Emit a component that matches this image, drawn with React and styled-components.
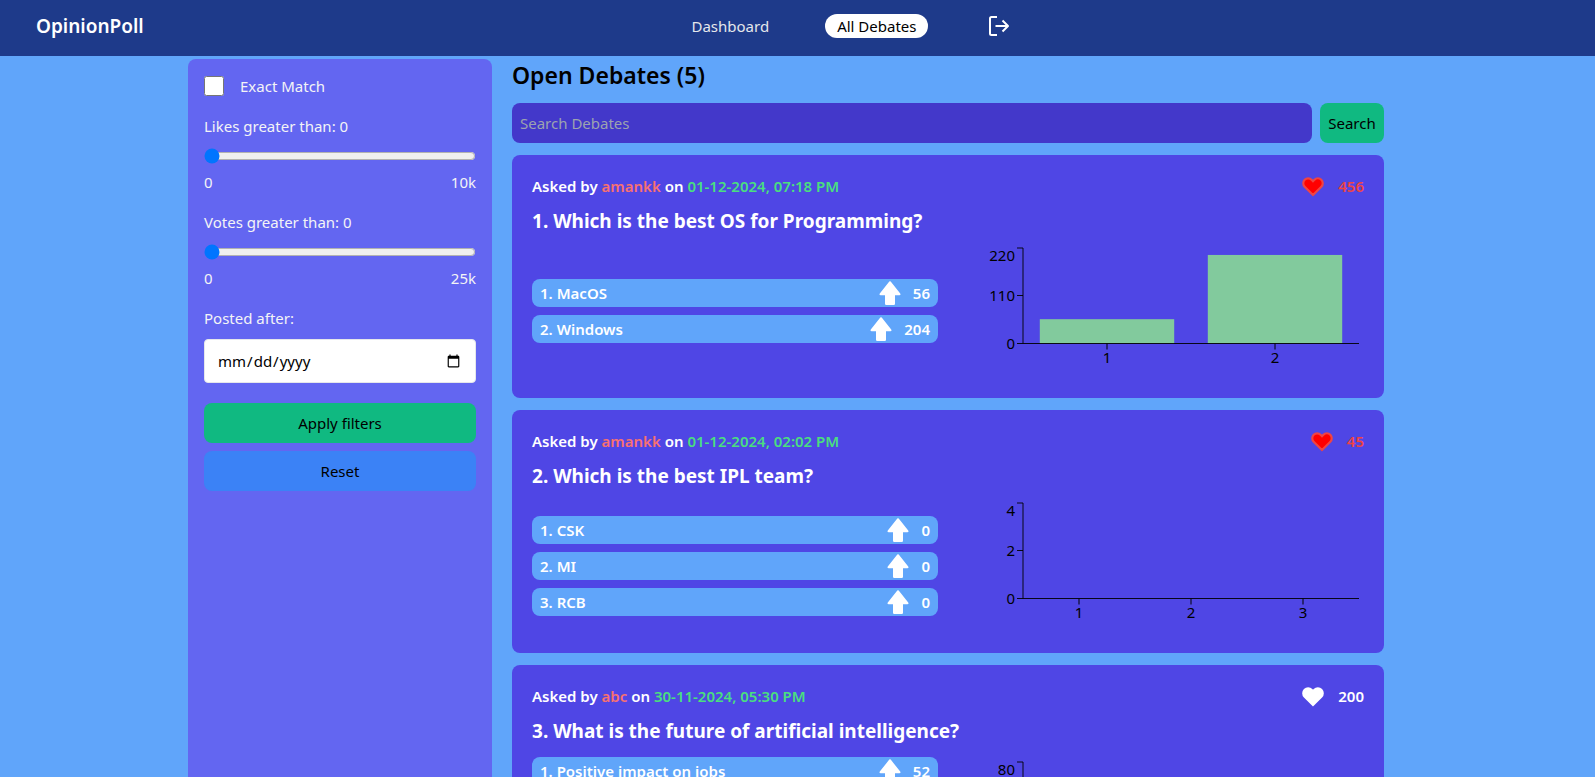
import React, { useState } from 'react';
import styled, { createGlobalStyle, css } from 'styled-components';

const GlobalStyle = createGlobalStyle`
  *, *::before, *::after { box-sizing: border-box; }
  body {
    margin: 0;
    background: #60a5fa;
    color: #000;
    font-family: "Noto Sans", sans-serif;
    font-size: 15px;
    line-height: 24px;
  }
  button, input { font: inherit; color: inherit; }
  button { border: 0; cursor: pointer; }
`;

const Page = styled.div`
  display: flex;
  flex-direction: column;
  height: 100vh;
`;

const Header = styled.header`
  display: grid;
  grid-template-columns: 42.6% 1fr;
  align-items: center;
  height: 56px;
  flex: none;
  padding-bottom: 4px;
  background: #1e3a8a;
  color: #fff;
`;

const Brand = styled.a`
  padding-left: 36px;
  color: inherit;
  font-size: 19px;
  font-weight: 600;
  text-decoration: none;
`;

const Nav = styled.nav`
  display: flex;
  align-items: center;
  gap: 44px;
`;

const NavLink = styled.a`
  padding: 0 12px;
  border-radius: 12px;
  color: #e5e7eb;
  text-decoration: none;
  ${(p) => p.$active && css`
    background: #fff;
    color: #000;
  `}
`;

const LogoutButton = styled.button`
  display: flex;
  padding: 0 16px;
  background: none;
  color: #fff;
`;

const Layout = styled.div`
  display: grid;
  grid-template-columns: 304px minmax(0, 1fr);
  gap: 20px;
  flex: 1;
  min-height: 0;
  padding: 3px 211px 0 188px;

  @media (max-width: 1200px) {
    padding-left: 16px;
    padding-right: 16px;
  }
`;

const Sidebar = styled.form`
  display: flex;
  flex-direction: column;
  gap: 16px;
  padding: 15px 16px 16px;
  border-radius: 8px 8px 0 0;
  background: #6366f1;
  color: #f3f4f6;
`;

const CheckLabel = styled.label`
  display: flex;
  align-items: center;
  gap: 16px;
`;

const Checkbox = styled.input`
  width: 20px;
  height: 20px;
  margin: 0;
`;

const Field = styled.div`
  display: flex;
  flex-direction: column;
`;

const Slider = styled.input`
  width: 100%;
  height: 16px;
  margin: 10px 0 6px;
`;

const RangeEnds = styled.div`
  display: flex;
  justify-content: space-between;
`;

const DateInput = styled.input`
  height: 44px;
  margin-top: 9px;
  padding: 0 12px;
  border: 1px solid #e5e7eb;
  border-radius: 4px;
  background: #fff;
  color: #000;
  font-size: 15px;
`;

const Actions = styled.div`
  display: flex;
  flex-direction: column;
  gap: 8px;
  margin-top: 4px;
`;

const Button = styled.button`
  height: 40px;
  min-width: 64px;
  padding: 0 8px;
  border-radius: 8px;
  background: ${(p) => (p.$tone === 'blue' ? '#3b82f6' : '#10b981')};
  color: #000;
`;

const Main = styled.main`
  min-height: 0;
  overflow-y: auto;
  scrollbar-width: none;
`;

const Heading = styled.h1`
  margin: 0 0 12px;
  font-size: 23px;
  font-weight: 600;
  line-height: 32px;
`;

const SearchBar = styled.form`
  display: flex;
  gap: 8px;
  margin-bottom: 12px;
`;

const SearchInput = styled.input`
  flex: 1;
  min-width: 0;
  height: 40px;
  padding: 0 8px;
  border: 0;
  border-radius: 8px;
  background: #4338ca;
  color: #fff;
  &::placeholder { color: #9ca3af; opacity: 1; }
`;

const DebateList = styled.div`
  display: flex;
  flex-direction: column;
  gap: 12px;
`;

const Card = styled.article`
  padding: 18px 20px 23px;
  border-radius: 8px;
  background: #4f46e5;
  color: #fff;
`;

const CardHeader = styled.div`
  display: flex;
  align-items: center;
  justify-content: space-between;
  height: 26px;
  font-weight: 600;
`;

const Meta = styled.p`
  margin: 0;
`;

const Author = styled.span`
  color: #f87171;
`;

const Posted = styled.time`
  color: #4ade80;
`;

const LikeButton = styled.button`
  display: flex;
  align-items: center;
  gap: 12px;
  padding: 0;
  background: none;
  color: ${(p) => (p.$liked ? '#ef4444' : '#fff')};
`;

const Question = styled.h2`
  margin: 8px 0 12px;
  font-size: 19px;
  font-weight: 700;
  line-height: 28px;
`;

const CardBody = styled.div`
  display: grid;
  grid-template-columns: 1fr 1fr;
  gap: 20px;
  align-items: center;
`;

const Options = styled.ol`
  display: flex;
  flex-direction: column;
  gap: 8px;
  margin: 0;
  padding: 0;
  list-style: none;
`;

const Option = styled.li`
  display: flex;
  align-items: center;
  justify-content: space-between;
  height: 28px;
  padding: 0 8px;
  border-radius: 8px;
  background: #60a5fa;
  font-weight: 600;
`;

const VoteButton = styled.button`
  display: flex;
  align-items: center;
  gap: 11px;
  padding: 0;
  background: none;
  color: #fff;
`;

const ChartSvg = styled.svg`
  display: block;
  width: 100%;
  height: 128px;
  overflow: visible;
  text { font-size: 15px; fill: #000; }
`;

const LogoutIcon = () => (
  <svg width="24" height="24" viewBox="0 0 24 24" fill="none" stroke="currentColor" strokeWidth="2" aria-hidden="true">
    <path d="M9 3H3.5A1.5 1.5 0 0 0 2 4.500v15A1.500 1.500 0 0 0 3.500 21H9M7.500 12H20.500M14.500 6.500 20 12l-5.500 5.500" strokeLinejoin="round" />
  </svg>
);

const HeartIcon = ({ liked }) => (
  <svg width="26" height="26" viewBox="0 0 24 24" fill={liked ? 'red' : 'currentColor'} stroke="currentColor" strokeWidth="2" aria-hidden="true">
    <path d="M4.318 6.318a4.500 4.500 0 0 0 0 6.364L12 20.364l7.682-7.682a4.500 4.500 0 0 0-6.364-6.364L12 7.636l-1.318-1.318a4.500 4.500 0 0 0-6.364 0z" />
  </svg>
);

const ArrowIcon = () => (
  <svg width="24" height="24" viewBox="0 0 24 24" fill="currentColor" aria-hidden="true">
    <path d="M11.300.600a1 1 0 0 1 1.400 0L22.200 12.600q.900 1.600-.900 1.600H17v8.600a1.200 1.200 0 0 1-1.200 1.200H8.200A1.200 1.200 0 0 1 7 22.800v-8.600H2.700q-1.800 0-.9-1.600z" />
  </svg>
);

const AXIS_LEFT = 65;
const AXIS_WIDTH = 336;
const AXIS_TOP = 1;
const AXIS_BOTTOM = 96.5;

function VoteChart({ votes, max }) {
  const band = AXIS_WIDTH / votes.length;
  const mid = 48.5;
  return (
    <ChartSvg viewBox="0 0 406 128" role="img" aria-label="Votes per option">
      {votes.map((v, i) => {
        const h = (v / max) * (AXIS_BOTTOM - AXIS_TOP);
        return (
          <rect key={i} x={AXIS_LEFT + band * (i + 0.1)} y={AXIS_BOTTOM - h} width={band * 0.8} height={h} fill="#82ca9d" />
        );
      })}
      <path
        d={`M59 ${AXIS_TOP}H65V${AXIS_BOTTOM}M59 ${mid}H65M59 ${AXIS_BOTTOM}H401`}
        fill="none"
        stroke="#000"
        strokeOpacity="0.9"
      />
      <text x="57" y="14" textAnchor="end">{max}</text>
      <text x="57" y="54" textAnchor="end">{max / 2}</text>
      <text x="57" y="102" textAnchor="end">0</text>
      {votes.map((_, i) => {
        const x = AXIS_LEFT + band * (i + 0.5);
        return (
          <g key={i}>
            <path d={`M${x} ${AXIS_BOTTOM}v6`} stroke="#000" />
            <text x={x} y="116" textAnchor="middle">{i + 1}</text>
          </g>
        );
      })}
    </ChartSvg>
  );
}

const debates = [
  {
    author: 'amankk', date: '01-12-2024, 07:18 PM', likes: 456, liked: true, max: 220,
    question: 'Which is the best OS for Programming?',
    options: [['MacOS', 56], ['Windows', 204]],
  },
  {
    author: 'amankk', date: '01-12-2024, 02:02 PM', likes: 45, liked: true, max: 4,
    question: 'Which is the best IPL team?',
    options: [['CSK', 0], ['MI', 0], ['RCB', 0]],
  },
  {
    author: 'abc', date: '30-11-2024, 05:30 PM', likes: 200, liked: false, max: 80,
    question: 'What is the future of artificial intelligence?',
    options: [['Positive impact on jobs', 52], ['Negative impact on jobs', 34], ['No major change', 18], ['Not sure', 9]],
  },
];

function DebateCard({ debate, number }) {
  return (
    <Card>
      <CardHeader>
        <Meta>
          Asked by <Author>{debate.author}</Author> on <Posted>{debate.date}</Posted>
        </Meta>
        <LikeButton type="button" $liked={debate.liked}>
          <HeartIcon liked={debate.liked} />
          {debate.likes}
        </LikeButton>
      </CardHeader>
      <Question>{number}. {debate.question}</Question>
      <CardBody>
        <Options>
          {debate.options.map(([name, votes], i) => (
            <Option key={name}>
              <span>{i + 1}. {name}</span>
              <VoteButton type="button">
                <ArrowIcon />
                {votes}
              </VoteButton>
            </Option>
          ))}
        </Options>
        <VoteChart votes={debate.options.map((o) => o[1])} max={debate.max} />
      </CardBody>
    </Card>
  );
}

function RangeField({ id, label, max, maxLabel }) {
  const [value, setValue] = useState(0);
  return (
    <Field>
      <label htmlFor={id}>{label} greater than: {value}</label>
      <Slider id={id} type="range" min="0" max={max} value={value} onChange={(e) => setValue(e.target.value)} />
      <RangeEnds><span>0</span><span>{maxLabel}</span></RangeEnds>
    </Field>
  );
}

export default function App() {
  return (
    <Page>
      <GlobalStyle />
      <Header>
        <Brand href="#home">OpinionPoll</Brand>
        <Nav>
          <NavLink href="#dashboard">Dashboard</NavLink>
          <NavLink href="#debates" $active>All Debates</NavLink>
          <LogoutButton type="button" aria-label="Log out"><LogoutIcon /></LogoutButton>
        </Nav>
      </Header>
      <Layout>
        <Sidebar onSubmit={(e) => e.preventDefault()}>
          <CheckLabel>
            <Checkbox type="checkbox" />
            Exact Match
          </CheckLabel>
          <RangeField id="likes" label="Likes" max="10000" maxLabel="10k" />
          <RangeField id="votes" label="Votes" max="25000" maxLabel="25k" />
          <Field>
            <label htmlFor="posted">Posted after:</label>
            <DateInput id="posted" type="date" />
          </Field>
          <Actions>
            <Button type="submit">Apply filters</Button>
            <Button type="reset" $tone="blue">Reset</Button>
          </Actions>
        </Sidebar>
        <Main>
          <Heading>Open Debates (5)</Heading>
          <SearchBar onSubmit={(e) => e.preventDefault()}>
            <SearchInput type="search" placeholder="Search Debates" aria-label="Search Debates" />
            <Button type="submit">Search</Button>
          </SearchBar>
          <DebateList>
            {debates.map((debate, i) => (
              <DebateCard key={debate.question} debate={debate} number={i + 1} />
            ))}
          </DebateList>
        </Main>
      </Layout>
    </Page>
  );
}
